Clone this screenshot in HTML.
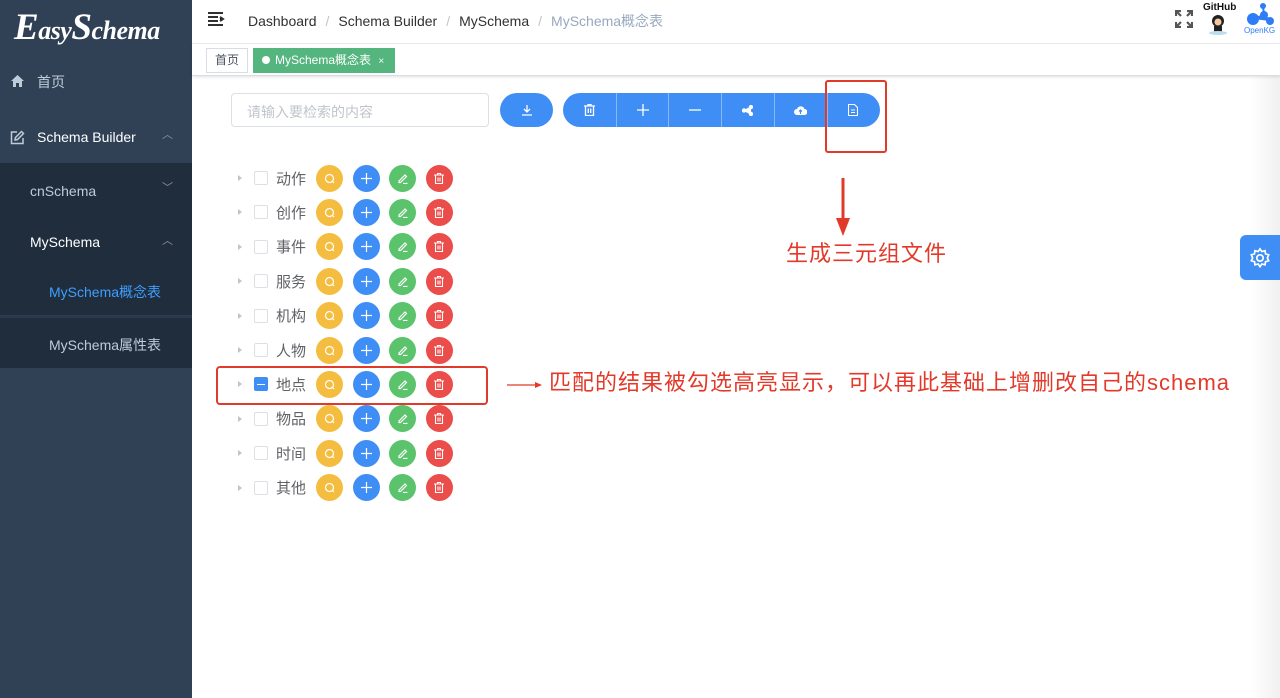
<!DOCTYPE html>
<html><head><meta charset="utf-8"><style>
*{margin:0;padding:0;box-sizing:border-box}
body{width:1280px;height:698px;overflow:hidden;background:#fff;font-family:"Liberation Sans","Noto Sans CJK SC",sans-serif;position:relative}
.side{position:absolute;left:0;top:0;width:192px;height:698px;background:#304156}
.logo{position:absolute;left:14px;top:6px;color:#fff;font-family:"Liberation Serif",serif;font-style:italic;font-weight:bold;font-size:26px;letter-spacing:-0.5px}
.logo b{font-size:37px}
.mi{position:absolute;left:0;width:192px;color:#bfcbd9;font-size:14px}
.sub{position:absolute;left:0;top:163px;width:192px;height:205px;background:#1f2d3d}
.hdr{position:absolute;left:192px;top:0;right:0;height:44px;border-bottom:1px solid #eee}
.bc{position:absolute;left:248px;top:11px;font-size:14px;color:#303133}
.bc span{color:#c0c4cc;margin:0 9px}
.tags{position:absolute;left:192px;top:44px;right:0;height:32px;border-bottom:1px solid #d8dce5;box-shadow:0 1px 3px rgba(0,0,0,.12)}
.tag{position:absolute;top:4px;height:25px;font-size:12px;line-height:23px;border:1px solid #d8dce5;padding:0 8px;color:#495060}
.inp{position:absolute;left:231px;top:93px;width:258px;height:34px;border:1px solid #dcdfe6;border-radius:4px;font-size:14px;color:#c0c4cc;padding:8px 15px}
.btn{position:absolute;top:93px;height:34px;background:#3f8ef5;color:#fff;display:flex;align-items:center;justify-content:center}
.seg{position:absolute;top:0;height:34px;width:52.7px;display:flex;align-items:center;justify-content:center;border-left:1px solid #8ab8f7}
.row{position:absolute;left:238px;height:30px;display:flex;align-items:center}
.arr{width:0;height:0;border-left:4px solid #c0c4cc;border-top:3.5px solid transparent;border-bottom:3.5px solid transparent;margin-right:12px}
.cb{width:14px;height:14px;border:1px solid #dcdfe6;border-radius:2px;background:#fff;margin-right:8px}
.lbl{font-size:15px;color:#606266;width:40px}
.c{width:27px;height:27px;border-radius:50%;margin-right:9.5px;display:flex;align-items:center;justify-content:center}
.y{background:#f5bd3f}.b{background:#3f8ef5}.g{background:#5ac36b}.r{background:#ea4d4a}
.red{color:#e23a2a;position:absolute;white-space:nowrap;font-size:22px;letter-spacing:1px}
</style></head><body>
<div class="side">
<div class="logo"><b>E</b>asy<b>S</b>chema</div>
<div class="mi" style="top:72px;height:20px"><svg style="position:absolute;left:10px;top:2px" width="15" height="14" viewBox="0 0 15 14"><path d="M7.5 1 L14 7 H12 V13 H9 V9 H6 V13 H3 V7 H1Z" fill="#bfcbd9"/></svg><span style="position:absolute;left:37px;top:0">首页</span></div>
<div class="mi" style="top:128px;height:20px"><svg style="position:absolute;left:10px;top:2px" width="15" height="15" viewBox="0 0 15 15" fill="none" stroke="#bfcbd9" stroke-width="1.5"><path d="M7 2H1.5V13.5H13V8"/><path d="M5 10L5.5 7.5L11.5 1.5L13.5 3.5L7.5 9.5Z"/></svg><span style="position:absolute;left:37px;top:1px;color:#fff">Schema Builder</span><span style="position:absolute;left:162px;top:-2px;font-size:11px;color:#909399">︿</span></div>
<div class="sub"></div>
<div style="position:absolute;left:0;top:315px;width:192px;height:3px;background:#2a394b"></div>
<div class="mi" style="top:183px"><span style="position:absolute;left:30px">cnSchema</span><span style="position:absolute;left:162px;top:-4px;font-size:11px;color:#909399">﹀</span></div>
<div class="mi" style="top:234px"><span style="position:absolute;left:30px;color:#fff">MySchema</span><span style="position:absolute;left:162px;top:-2px;font-size:11px;color:#909399">︿</span></div>
<div class="mi" style="top:282px"><span style="position:absolute;left:49px;color:#409eff">MySchema概念表</span></div>
<div class="mi" style="top:335px"><span style="position:absolute;left:49px">MySchema属性表</span></div>
</div>
<div class="hdr">
<svg style="position:absolute;left:16px;top:12px" width="17" height="14" viewBox="0 0 17 14" stroke="#303133" stroke-width="2"><path d="M0 1H15M0 5H10M0 9H10M0 13H15M12 5L15 7L12 9"/></svg>
</div>
<div class="bc">Dashboard<span>/</span>Schema Builder<span>/</span>MySchema<span>/</span><i style="font-style:normal;color:#97a8be">MySchema概念表</i></div>
<svg style="position:absolute;left:1175px;top:10px" width="18" height="18" viewBox="0 0 18 18" stroke="#555" stroke-width="2.2" fill="none"><path d="M1 6V1H6M1 1L6 6M12 1H17V6M17 1L12 6M1 12V17H6M1 17L6 12M12 17H17V12M17 17L12 12"/></svg>
<div style="position:absolute;left:1203px;top:2px;font-size:10px;font-weight:bold;color:#111">GitHub</div>
<svg style="position:absolute;left:1207px;top:13px" width="22" height="22" viewBox="0 0 22 22"><circle cx="11" cy="8" r="6" fill="#222"/><rect x="7" y="13" width="8" height="7" fill="#222"/><ellipse cx="11" cy="20" rx="9" ry="2" fill="#bde"/><circle cx="11" cy="9" r="3.5" fill="#f3c9a5"/></svg>
<svg style="position:absolute;left:1245px;top:2px" width="30" height="24" viewBox="0 0 30 24" fill="#2f7cf6"><circle cx="18" cy="4" r="3"/><circle cx="8" cy="17" r="6"/><circle cx="19" cy="13" r="4"/><circle cx="25" cy="19" r="4"/><path d="M8 17L19 13L25 19M18 4L19 13" stroke="#2f7cf6" stroke-width="2"/></svg>
<div style="position:absolute;left:1244px;top:26px;font-size:8px;color:#2f7cf6">OpenKG</div>
<div class="tags">
<div class="tag" style="left:14px">首页</div>
<div class="tag" style="left:61px;background:#55b57e;border-color:#55b57e;color:#fff;width:142px"><span style="display:inline-block;width:8px;height:8px;border-radius:50%;background:#fff;margin-right:5px"></span>MySchema概念表 <span style="font-size:10px;margin-left:4px">×</span></div>
</div>
<div style="position:absolute;right:0;top:76px;width:30px;height:622px;background:linear-gradient(to right,rgba(0,0,0,0),rgba(0,0,0,.06))"></div>
<div class="inp">请输入要检索的内容</div>
<div class="btn" style="left:500px;width:53px;border-radius:17px"><svg width="12" height="12" viewBox="0 0 12 12" stroke="#fff" stroke-width="1.3" fill="none"><path d="M6 1V8M3 5L6 8L9 5M1 11H11"/></svg></div>
<div class="btn" style="left:563px;width:317px;border-radius:17px">
<div class="seg" style="left:0;border:none"><svg width="11" height="12" viewBox="0 0 11 12" stroke="#fff" stroke-width="1.3" fill="none"><path d="M0 2H11M4 2V0.5H7V2M1.5 2V11.5H9.5V2M4.3 4.5V9M6.7 4.5V9"/></svg></div>
<div class="seg" style="left:52.7px"><svg width="12" height="12" stroke="#fff" stroke-width="1.3"><path d="M6 0V12M0 6H12"/></svg></div>
<div class="seg" style="left:105.4px"><svg width="12" height="12" stroke="#fff" stroke-width="1.3"><path d="M0 6H12"/></svg></div>
<div class="seg" style="left:158.1px"><svg width="11" height="11" viewBox="0 0 11 11" fill="#fff" stroke="#fff" stroke-width="1.2"><circle cx="9" cy="2" r="1.6"/><circle cx="2" cy="5.5" r="1.6"/><circle cx="9" cy="9" r="1.6"/><path d="M9 2L2 5.5L9 9"/></svg></div>
<div class="seg" style="left:210.8px"><svg width="13" height="10" viewBox="0 0 13 10"><path d="M3 10A3 3 0 0 1 3 4A4 4 0 0 1 10.5 4A3 3 0 0 1 10.5 10Z" fill="#fff"/><path d="M6.5 9V5M5 6.5L6.5 5L8 6.5" stroke="#3f8ef5" stroke-width="1.2" fill="none"/></svg></div>
<div class="seg" style="left:263.5px"><svg width="10" height="12" viewBox="0 0 10 12" stroke="#fff" stroke-width="1.1" fill="none"><path d="M0.5 0.5H6.5L9.5 3.5V11.5H0.5Z M3 6H7M3 8.5H7"/></svg></div>
</div>
<div style="position:absolute;left:825px;top:80px;width:62px;height:73px;border:2px solid #e23a2a;border-radius:3px"></div>
<svg style="position:absolute;left:835px;top:178px" width="16" height="58" viewBox="0 0 16 58"><path d="M8 0V42" stroke="#e23a2a" stroke-width="3"/><path d="M1 40H15L8 58Z" fill="#e23a2a"/></svg>
<div class="red" style="left:786px;top:236px">生成三元组文件</div>
<div style="position:absolute;left:216px;top:366px;width:272px;height:39px;border:2px solid #e23a2a;border-radius:4px"></div>
<svg style="position:absolute;left:507px;top:381px" width="36" height="8"><path d="M0 4H30" stroke="#e23a2a" stroke-width="1.3"/><path d="M28 1L35 4L28 7Z" fill="#e23a2a"/></svg>
<div class="red" style="left:549px;top:365px">匹配的结果被勾选高亮显示，可以再此基础上增删改自己的schema</div>
<div style="position:absolute;right:0;top:235px;width:40px;height:45px;background:#3f8ef5;border-radius:6px 0 0 6px;display:flex;align-items:center;justify-content:center"><svg width="22" height="22" viewBox="0 0 24 24" fill="none" stroke="#fff" stroke-width="1.8"><circle cx="12" cy="12" r="3.5"/><path d="M12 2l2 3 3.5-1 .5 3.5 3.5 1-1.5 3.5 1.5 3-3.5 1-.5 3.5-3.5-1-2 3-2-3-3.5 1-.5-3.5-3.5-1 1.5-3-1.5-3.5 3.5-1 .5-3.5 3.5 1z"/></svg></div>
<div id="tree"></div>
<script>
var L=["动作","创作","事件","服务","机构","人物","地点","物品","时间","其他"],h="";
var q='<svg width="11" height="11" stroke="#fff" stroke-width="1.2" fill="none"><circle cx="5.5" cy="5.5" r="4"/><path d="M8 8L10 10"/></svg>';
var p='<svg width="11" height="11" stroke="#fff" stroke-width="1.2"><path d="M5.5 0V11M0 5.5H11"/></svg>';
var e='<svg width="11" height="11" stroke="#fff" stroke-width="1.2" fill="none"><path d="M2 8L8 2L9.5 3.5L3.5 9.5H2Z M6 10.5H10.5"/></svg>';
var d='<svg width="10" height="11" stroke="#fff" stroke-width="1.1" fill="none"><path d="M0 2H10M3.5 2V0.5H6.5V2M1.5 2V10.5H8.5V2M4 4.5V8.5M6 4.5V8.5"/></svg>';
L.forEach(function(t,i){var ck=i==6?'style="background:#3f8ef5;border-color:#3f8ef5;display:flex;align-items:center;justify-content:center"><i style="width:8px;height:1.5px;background:#fff"></i':'';
h+='<div class="row" style="top:'+(163+i*34.4)+'px"><div class="arr"></div><div class="cb" '+(ck||'')+'></div><div class="lbl">'+t+'</div><div class="c y">'+q+'</div><div class="c b">'+p+'</div><div class="c g">'+e+'</div><div class="c r">'+d+'</div></div>';});
document.getElementById('tree').innerHTML=h;
</script>
</body></html>
